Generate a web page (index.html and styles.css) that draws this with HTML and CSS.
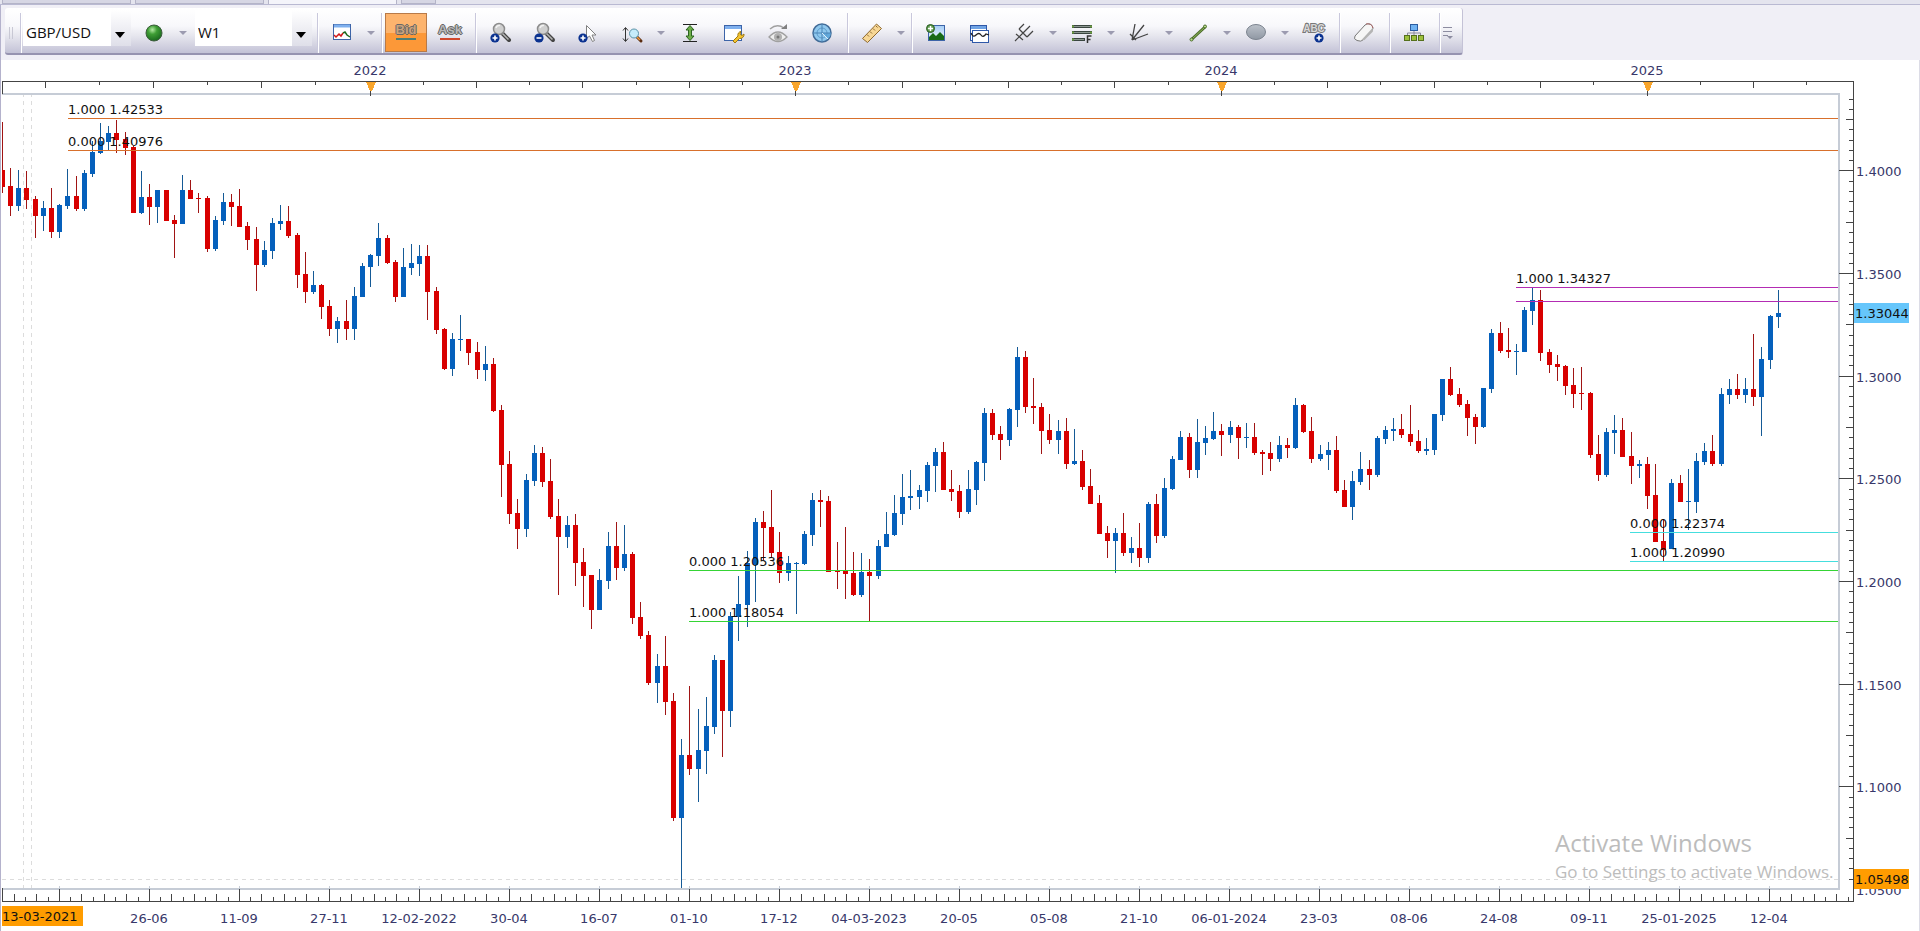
FILE: index.html
```html
<!DOCTYPE html>
<html lang="en">
<head>
  <meta charset="UTF-8">
  <title>GBP/USD W1</title>
  <link rel="stylesheet" href="styles.css">
</head>
<body>
  <svg class="defs" width="0" height="0" aria-hidden="true">
    <defs>
      <radialGradient id="ball" cx="0.4" cy="0.3" r="0.7">
        <stop offset="0" stop-color="#b4eaa4"/>
        <stop offset="0.4" stop-color="#3f9e35"/>
        <stop offset="1" stop-color="#1a6a1e"/>
      </radialGradient>
      <linearGradient id="steel" x1="0" y1="0" x2="0" y2="1">
        <stop offset="0" stop-color="#bcc2ca"/>
        <stop offset="1" stop-color="#8f97a3"/>
      </linearGradient>
      <linearGradient id="sky" x1="0" y1="0" x2="0" y2="1">
        <stop offset="0" stop-color="#a4cdf6"/>
        <stop offset="1" stop-color="#f2f8ff"/>
      </linearGradient>
      <symbol id="lens" viewBox="0 0 24 24">
        <path d="M14 12l7 7" stroke="#444" stroke-width="4" stroke-linecap="round"/>
        <path d="M14 12l6.500 6.500" stroke="#b5b5b5" stroke-width="1.500"/>
        <circle cx="11" cy="8" r="5.500" fill="#cfcfcf" stroke="#8d8d8d" stroke-width="1.500"/>
        <path d="M8 7a3.500 3.500 0 0 1 4-2.500" fill="none" stroke="#f2f2f2" stroke-width="1.500"/>
      </symbol>
      <symbol id="plus" viewBox="0 0 10 10">
        <circle cx="5" cy="5" r="4.600" fill="#0b3290"/>
        <path d="M2.500 5h5M5 2.500v5" stroke="#fff" stroke-width="1.600"/>
      </symbol>
    </defs>
  </svg>

  <div class="tabs">
    <div class="tab"></div>
    <div class="tab"></div>
    <div class="tab active"></div>
    <div class="tab small"></div>
  </div>

  <div class="toolbar-row">
    <div class="toolbar">
      <span class="grip"></span>
      <span class="sep"></span>
      <span class="combo symbol">
        <select aria-label="Symbol"><option>GBP/USD</option></select>
      </span>
      <button class="tool" title="Connection">
        <svg viewBox="0 0 24 24"><circle cx="12" cy="12" r="8" fill="url(#ball)" stroke="#3c5c3c"/></svg>
      </button>
      <button class="drop" title="More"></button>
      <span class="combo period">
        <select aria-label="Period"><option>W1</option></select>
      </span>
      <span class="sep"></span>
      <button class="tool" title="Chart type">
        <svg viewBox="0 0 24 24">
          <rect x="3.500" y="3.500" width="17" height="15" fill="#fff" stroke="#3d64a8"/>
          <path d="M4 5h16" stroke="#7fb0ee" stroke-width="3"/>
          <path d="M4 14l2 2 3-3 2 2 2-3" fill="none" stroke="#d01818" stroke-width="1.500"/>
          <path d="M13 12l2-1 2 3 3 2" fill="none" stroke="#1d6a1d" stroke-width="1.500"/>
        </svg>
      </button>
      <button class="drop" title="More"></button>
      <span class="sep"></span>
      <button class="tool price bid pressed">Bid</button>
      <button class="tool price ask">Ask</button>
      <span class="sep"></span>
      <button class="tool" title="Zoom in">
        <svg viewBox="0 0 24 24"><use href="#lens" width="24" height="24"/><use href="#plus" x="2" y="12" width="10" height="10"/></svg>
      </button>
      <button class="tool" title="Zoom out">
        <svg viewBox="0 0 24 24"><use href="#lens" width="24" height="24"/><circle cx="7" cy="17" r="4.600" fill="#0b3290"/><path d="M4.500 17h5" stroke="#fff" stroke-width="1.600"/></svg>
      </button>
      <button class="tool" title="Cursor">
        <svg viewBox="0 0 24 24"><path d="M10.500 4.500v13l3-2.500 3 5.500 2-1-2.500-5.500h4z" fill="#fff" stroke="#808080"/><use href="#plus" x="2" y="12" width="10" height="10"/></svg>
      </button>
      <button class="tool" title="Vertical zoom">
        <svg viewBox="0 0 24 24">
          <path d="M5.500 7v13M3 9.500l2.500-3 2.500 3M3 17.500l2.500 3 2.500-3" fill="none" stroke="#333"/>
          <path d="M17 16l4 4" stroke="#5a2c10" stroke-width="3" stroke-linecap="round"/>
          <path d="M17 16l3 3" stroke="#ee9a3c" stroke-width="1.500"/>
          <circle cx="14" cy="12.500" r="4.500" fill="#c6ecfa" stroke="#5b93a8"/>
        </svg>
      </button>
      <button class="drop" title="More"></button>
      <button class="tool" title="Fit height">
        <svg viewBox="0 0 24 24">
          <path d="M5 3.500h14M5 20.500h14" stroke="#222"/>
          <path d="M12 4.500l4 4.500h-2.500v6h2.500l-4 4.500-4-4.500h2.500v-6h-2.500z" fill="#6eae4a" stroke="#2c6420"/>
        </svg>
      </button>
      <button class="tool" title="Chart settings">
        <svg viewBox="0 0 24 24">
          <rect x="2.500" y="4.500" width="17" height="15" fill="#fff" stroke="#3d64a8"/>
          <path d="M3 6.500h16" stroke="#7fb0ee" stroke-width="3"/>
          <path d="M11 20l5-5a3.500 3.500 0 0 1 3-4.500l-1 2.500 2 1.500 2-1.500a4 4 0 0 1-4.500 4.500l-4.500 4.500z" fill="#f4c430" stroke="#a07a10"/>
        </svg>
      </button>
      <button class="tool" title="Show or hide">
        <svg viewBox="0 0 24 24">
          <path d="M3 16q9-10 18 0q-9 9-18 0z" fill="#eee" stroke="#a0a0a0" stroke-width="1.300"/>
          <circle cx="12" cy="16" r="4" fill="#b0b0b0"/><circle cx="12" cy="16" r="1.500" fill="#777"/>
          <path d="M4 8q7-6 14-1" fill="none" stroke="#a0a0a0" stroke-width="1.500"/><path d="M15 8h6v-5z" fill="#808080"/>
        </svg>
      </button>
      <button class="tool" title="Radar">
        <svg viewBox="0 0 24 24">
          <circle cx="12" cy="12" r="9" fill="#8fc8ee" stroke="#426c98" stroke-width="1.500"/>
          <path d="M12 12l6 6a9 9 0 0 0 3-6z" fill="#62a9dc"/>
          <circle cx="12" cy="12" r="5" fill="none" stroke="#5f9ccb"/>
          <path d="M12 3v18M3 12h18" stroke="#4a83b4"/>
          <path d="M12 12l6 6" stroke="#dff0fb"/>
        </svg>
      </button>
      <span class="sep"></span>
      <button class="tool" title="Ruler">
        <svg viewBox="0 0 24 24">
          <path d="M2.500 17.500l14-14.500 5 4.500-14 14z" fill="#f7d795" stroke="#8f6a30"/>
          <path d="M7 13.500l2 2M10 10.500l2 2M13 7.500l2 2M16 5l1.500 1.500" stroke="#8f6a30"/>
        </svg>
      </button>
      <button class="drop" title="More"></button>
      <span class="sep"></span>
      <button class="tool" title="Insert picture">
        <svg viewBox="0 0 24 24">
          <rect x="4.500" y="4.500" width="16" height="15" fill="url(#sky)" stroke="#3d64a8"/>
          <path d="M5 19v-3l4-4 3 3 4-4 4 4v4z" fill="#176a18"/>
          <circle cx="6.500" cy="7.500" r="4" fill="#5c9a4c" stroke="#2b5c22"/>
          <path d="M4 7.500h5M6.500 5v5" stroke="#fff" stroke-width="1.500"/>
        </svg>
      </button>
      <button class="tool" title="Add indicator">
        <svg viewBox="0 0 24 24">
          <rect x="2.500" y="4.500" width="16" height="15" fill="#fff" stroke="#2f58a8"/>
          <path d="M3 6.500h15" stroke="#6fa3e4" stroke-width="3"/>
          <rect x="4.500" y="9.500" width="16" height="12" fill="#fff" stroke="#2f58a8"/>
          <path d="M3 12q2 5 5 2t5 0 5-1l3 1" fill="none" stroke="#222" stroke-width="1.300"/>
        </svg>
      </button>
      <button class="tool" title="Pitchfork">
        <svg viewBox="0 0 24 24" fill="none" stroke="#444" stroke-width="1.200">
          <path d="M3 20l8-8M7 8l8 8M7 8l5-5M11 12l7-7M15 16l6-6M4 13l7 6"/>
        </svg>
      </button>
      <button class="drop" title="More"></button>
      <button class="tool" title="Fibonacci">
        <svg viewBox="0 0 24 24">
          <path d="M2 5.500h20M2 11.500h20M2 18.500h13" stroke="#3a4640" stroke-width="3"/>
          <path d="M3 5.500h18M3 11.500h18M3 18.500h11" stroke="#8b9690" stroke-width="1"/>
          <path d="M17.500 22v-7h4M17.500 18.500h3" fill="none" stroke="#333" stroke-width="1.500"/>
          <path d="M2 5.500h2M20 5.500h2M2 11.500h2M20 11.500h2M2 18.500h2" stroke="#6da040" stroke-width="2"/>
        </svg>
      </button>
      <button class="drop" title="More"></button>
      <button class="tool" title="Fan">
        <svg viewBox="0 0 24 24" fill="none" stroke="#444" stroke-width="1.300">
          <path d="M4 19l3-16M4 19l12-15M4 19l16-6M2 13l6 6"/>
        </svg>
      </button>
      <button class="drop" title="More"></button>
      <button class="tool" title="Line">
        <svg viewBox="0 0 24 24">
          <path d="M6 18l13-12" stroke="#4b6b2a" stroke-width="3"/><path d="M6 18l13-12" stroke="#8fb85a"/>
          <circle cx="5.500" cy="18.500" r="1.500" fill="#b8e08c" stroke="#4b6b2a"/><circle cx="19" cy="5.500" r="1.500" fill="#b8e08c" stroke="#4b6b2a"/>
        </svg>
      </button>
      <button class="drop" title="More"></button>
      <button class="tool" title="Ellipse">
        <svg viewBox="0 0 24 24"><ellipse cx="12" cy="11" rx="9.500" ry="7.500" fill="url(#steel)" stroke="#7c848f"/></svg>
      </button>
      <button class="drop" title="More"></button>
      <button class="tool" title="Text label">
        <svg viewBox="0 0 24 24"><text class="abc" x="12" y="11">ABC</text><use href="#plus" x="12" y="12" width="10" height="10"/></svg>
      </button>
      <span class="sep"></span>
      <button class="tool" title="Eraser">
        <svg viewBox="0 0 24 24">
          <path d="M3 15l10-11q2-2 5-1t3 5l-10 11q-2 2-6 .5t-2-4.500z" fill="#f6f6f6" stroke="#777"/>
          <path d="M9 19.500l11.500-12.500q1 3 0 4l-8 8z" fill="#b4b4b4"/>
          <path d="M14 3q6-1 7 4" fill="none" stroke="#b06a6a"/>
        </svg>
      </button>
      <span class="sep"></span>
      <button class="tool" title="Templates">
        <svg viewBox="0 0 24 24">
          <path d="M12 9v6M5.500 15v-3h13v3" fill="none" stroke="#8a8a9a"/>
          <rect x="8.500" y="3.500" width="7" height="6" fill="#6fb2f2" stroke="#2c5ca0"/>
          <rect x="2.500" y="14.500" width="5" height="5" fill="#9cc03c" stroke="#55701c"/>
          <rect x="9.500" y="14.500" width="5" height="5" fill="#9cc03c" stroke="#55701c"/>
          <rect x="16.500" y="14.500" width="5" height="5" fill="#9cc03c" stroke="#55701c"/>
        </svg>
      </button>
      <span class="sep"></span>
      <button class="more" title="Customize">
        <svg viewBox="0 0 12 24"><path d="M1 6.500h9M1 10.500h9M1 14.500h5" stroke="#8c8ca0"/><path d="M5 15h6l-3 3z" fill="#8c8ca0"/></svg>
      </button>
    </div>
  </div>

  <div class="chart-area">
    <svg id="chart" class="chart"></svg>
    <div class="watermark">
      <p class="watermark-title">Activate Windows</p>
      <p class="watermark-text">Go to Settings to activate Windows.</p>
    </div>
  </div>

  <script src="script.js"></script>
</body>
</html>
```

FILE: styles.css
```css
* {
  box-sizing: border-box;
}

body {
  margin: 0;
  height: 100vh;
  display: flex;
  flex-direction: column;
  overflow: hidden;
  background-color: white;
  font-family: "Open Sans", "Noto Sans", sans-serif;
}

.defs {
  position: absolute;
}

.tabs {
  display: flex;
  gap: 4px;
  height: 5px;
  padding-left: 2px;
  background-color: #e4e4ee;
  border-bottom: 1px solid #b9b9d2;
}

.tab {
  width: 129px;
  height: 4px;
  background-color: #d6d6e4;
  border: 1px solid #b4b4c8;
  border-top: none;
}

.tab.active {
  background-color: #f4f4fa;
  border-bottom: none;
}

.tab.small {
  width: 35px;
}

.toolbar-row {
  display: flex;
  height: 55px;
  padding: 3px 0 5px 4px;
  background-color: #f0eff6;
  border-left: 1px solid #b4b2cc;
}

.toolbar {
  display: flex;
  align-items: center;
  height: 47px;
  padding-top: 4px;
  border-bottom: 2px solid #9693b0;
  border-right: 1px solid #c4c2d6;
  border-radius: 3px;
  background: linear-gradient(#ffffff, #f8f8fb 40%, #e6e6ee 62%, #c3c2d6);
}

.grip {
  width: 12px;
  height: 12px;
  border-left: 4px solid transparent;
  background: repeating-linear-gradient(90deg, #c8c8d4 0 1px, transparent 1px 3px) content-box;
  padding-right: 2px;
}

.sep {
  width: 6px;
  height: 40px;
  background: linear-gradient(90deg, transparent 3px, #c9c8dc 3px 4px, white 4px 5px, transparent 5px);
}

.combo {
  position: relative;
  height: 36px;
  margin-bottom: 10px;
}

.combo.symbol {
  width: 108px;
  margin-right: 1px;
}

.combo.period {
  width: 117px;
  margin-left: 5px;
  margin-right: 2px;
}

.combo select {
  appearance: none;
  width: 100%;
  height: 100%;
  padding: 8px 24px 0 3px;
  border: none;
  border-radius: 0;
  background: linear-gradient(#fff, #dfdfe9) right / 20px 100% no-repeat white;
  color: #111;
  font: 15px "Open Sans", "Noto Sans", sans-serif;
}

.combo::after {
  content: "";
  position: absolute;
  right: 6px;
  top: 22px;
  border: 5px solid transparent;
  border-top: 6px solid black;
  border-bottom: none;
  pointer-events: none;
}

button {
  padding: 0;
  border: none;
  background: none;
}

.tool {
  display: flex;
  align-items: center;
  justify-content: center;
  width: 44px;
  height: 39px;
}

.tool svg {
  width: 24px;
  height: 24px;
}

.drop {
  width: 14px;
  height: 39px;
}

.drop::before {
  content: "";
  display: block;
  width: 0;
  margin: 0 auto;
  border: 4px solid transparent;
  border-top-color: #9c9bb0;
  border-bottom: none;
}

.price {
  position: relative;
  padding-bottom: 6px;
  color: #b8b8b8;
  font: bold 13px "Liberation Sans", sans-serif;
  text-shadow: 1px 0 #666, -1px 0 #666, 0 1px #666, 0 -1px #666;
}

.price::after {
  content: "";
  position: absolute;
  left: 12px;
  bottom: 12px;
  width: 20px;
  height: 2px;
}

.bid::after {
  background-color: #4a7d76;
}

.ask::after {
  background-color: #d0482c;
}

.price.pressed {
  width: 42px;
  margin: 0 1px;
  border: 1px solid #b87a48;
  background: linear-gradient(#fdb46e 52%, #fc9838 52%);
  color: #c9a27c;
}

.pressed::after {
  left: 10px;
  bottom: 11px;
}

.abc {
  fill: #d8d8d8;
  stroke: #777;
  stroke-width: 2px;
  paint-order: stroke;
  font: bold 10px "Liberation Sans", sans-serif;
  text-anchor: middle;
}

.more {
  width: 20px;
  height: 39px;
  padding-right: 6px;
}

.more svg {
  display: block;
  width: 12px;
  height: 24px;
}

.chart-area {
  position: relative;
  flex: 1;
  min-height: 0;
  border-left: 1px solid #b4b2cc;
  border-right: 1px solid #dcdce6;
}

.chart {
  display: block;
  width: 100%;
  height: 100%;
  shape-rendering: crispEdges;
}

.chart text {
  font: 13px "DejaVu Sans", sans-serif;
  fill: #38386a;
}

.chart .middle {
  text-anchor: middle;
}

.chart .dark {
  fill: #111;
}

.axis {
  fill: #444;
}

.frame {
  fill: #c6ccd6;
}

.guide {
  stroke: #dcdcdc;
  stroke-dasharray: 4 4;
}

.up {
  fill: #0560bc;
}

.down {
  fill: #d80000;
}

.up-wick {
  fill: #155a96;
}

.down-wick {
  fill: #a01414;
}

.year {
  fill: #f9a52b;
}

.tag-last {
  fill: #66c6fb;
}

.tag-cursor {
  fill: #ff9c00;
}

.watermark {
  position: absolute;
  right: 80px;
  bottom: 46px;
  width: 284px;
  color: #bcbcbc;
  white-space: nowrap;
}

.watermark p {
  margin: 0;
}

.watermark-title {
  font-size: 24px;
  line-height: 32px;
}

.watermark-text {
  font-size: 17px;
  line-height: 26px;
}
```

FILE: script.js
```js
// one weekly candle each: direction, then high, body top, body bottom, low
// levels count downwards on a 93-888 scale, 171 is 1.4000 and 102.65 is 0.0500
const candles = `
R122,170,187,193 R168,186,206,216 B170,188,206,211 R171,188,200,209 R196,199,216,238 B201,208,216,231
R188,208,232,238 B204,205,232,238 B169,196,206,209 R176,196,209,211 B170,173,209,211 B141,152,174,177
B123,141,153,154 B126,133,142,150 R120,133,140,153 R132,139,148,155 R146,147,213,213 B171,197,213,214
R184,197,207,225 B190,190,207,223 R190,190,221,221 R215,220,224,258 B175,190,224,224 R180,190,199,199
R193,198,199,213 R196,198,249,252 B216,220,249,251 B193,202,221,225 R194,202,207,226 R189,206,227,227
R222,226,240,250 R227,239,265,291 B241,250,265,267 B218,223,251,259 B205,221,224,230 R206,221,236,238
R233,235,275,288 R252,274,292,303 B271,285,292,294 R284,285,307,319 R300,306,329,336 B317,321,329,343
R300,321,329,340 B287,296,329,340 B263,266,297,297 B254,255,267,287 B223,238,256,266 R235,238,263,264
R260,262,297,302 B248,267,297,297 B244,263,268,275 B245,256,264,276 R245,256,292,320 R287,291,330,334
R328,329,369,370 B333,339,369,376 B315,339,340,351 R339,339,353,365 R342,352,370,379 B346,364,370,381
R358,364,411,412 R405,410,465,497 R451,464,514,524 R499,513,529,549 B474,480,529,537 B445,453,481,486
R447,453,482,487 R459,481,517,519 R499,516,537,595 B516,525,537,548 R514,525,563,586 R548,562,576,607
R575,575,610,629 B569,580,610,610 B532,546,581,589 R522,546,568,580 B525,554,568,571 R552,554,618,624
R602,617,636,639 R631,635,683,685 B654,666,683,703 R636,666,702,715 R693,701,818,821 B739,755,818,888
R686,755,769,775 B709,750,769,802 B697,726,751,774 B655,660,727,734 R660,660,711,757 B612,616,711,727
B576,604,617,641 B551,563,605,627 B518,522,565,602 R511,522,528,560 R490,527,553,557 R532,552,573,583
B556,563,573,581 B562,563,564,614 B531,534,564,565 B493,500,535,546 R490,500,502,527 R496,501,572,572
R542,571,572,589 R527,571,574,599 R552,573,595,596 B553,572,595,597 R559,572,576,621 B540,546,576,579
B512,534,547,547 B495,513,535,536 B474,497,514,525 B470,496,498,510 B485,490,497,509 B462,465,491,502
B448,452,466,492 R442,452,490,490 R470,489,492,501 R485,491,512,518 B470,489,512,514 B461,462,490,505
B408,413,463,481 R409,413,435,440 R426,434,440,460 B408,409,440,446 B347,357,410,427 R351,357,407,413
R378,406,408,424 R403,407,431,454 R414,430,440,444 B420,431,440,454 R418,431,464,469 B429,461,464,465
R450,461,487,490 R469,486,504,504 R495,503,534,534 R526,533,541,558 B528,533,541,573 R513,533,553,556
B537,548,553,563 R523,548,558,567 B502,504,558,563 R494,504,536,543 B478,488,536,538 B456,459,489,490
B431,437,460,460 R433,437,470,478 B419,442,470,478 B426,438,443,455 B412,431,439,440 R424,431,435,456
B421,427,435,443 R425,427,438,459 B423,437,438,448 R423,437,453,455 R450,452,454,475 R442,453,459,471
B436,445,459,462 R438,445,448,458 B398,405,448,449 R404,405,432,433 R417,431,459,463 B445,454,459,461
B442,450,455,470 R436,450,491,493 R480,490,507,507 B471,481,507,520 B452,469,482,485 R460,469,475,490
B436,438,475,477 B426,430,439,444 B418,429,431,441 R414,429,435,438 R405,434,442,446 R430,441,451,453
B438,449,451,455 B414,414,450,455 B379,379,415,421 R367,379,395,396 R388,394,405,407 R400,404,418,436
R414,417,427,444 B388,388,427,428 B329,333,389,393 R322,333,351,353 R328,350,352,358 B344,351,352,375
B307,310,352,352 B288,300,311,325 R290,300,353,361 R349,352,365,373 R355,364,367,381 R365,366,386,395
R368,385,394,408 R367,393,394,410 R392,393,455,458 R435,454,475,481 B428,432,475,477 B415,430,433,454
R418,430,457,457 R432,456,466,484 B460,464,466,478 R457,464,496,509 R464,495,542,542 R519,541,550,561
B479,483,549,549 R475,483,502,502 B469,501,502,530 B453,461,502,513 B443,451,462,465 R435,451,464,466
B388,394,464,466 B379,389,395,404 R374,389,395,399 B378,389,395,403 R334,389,397,406 B347,359,397,436
B315,316,360,369 B290,313,317,328`.trim().split(/\s+/);

// level, start, colour, label
const levels = [
  [118, 68, '#d8702c', '1.000 1.42533'],
  [150, 68, '#d8702c', '0.000 1.40976'],
  [287, 1516, '#b32cb3', '1.000 1.34327'],
  [301, 1516, '#b32cb3', ''],
  [532, 1630, '#45dede', '0.000 1.22374'],
  [561, 1630, '#45dede', '1.000 1.20990'],
  [570, 689, '#35d435', '0.000 1.20536'],
  [621, 689, '#35d435', '1.000 1.18054']
];

const dates = ['', '26-06', '11-09', '27-11', '12-02-2022', '30-04', '16-07', '01-10', '17-12', '04-03-2023',
  '20-05', '05-08', '21-10', '06-01-2024', '23-03', '08-06', '24-08', '09-11', '25-01-2025', '12-04'];

const years = { 6: '2022', 14: '2023', 22: '2024', 30: '2025' };

const chart = document.getElementById('chart');

function rect(x, y, w, h, cls) {
  return `<rect x="${x}" y="${y}" width="${w}" height="${h}" class="${cls}"/>`;
}

function text(x, y, value, cls = '') {
  return `<text x="${x}" y="${y}" class="${cls}">${value}</text>`;
}

function drawChart() {
  const left = 1;
  const right = chart.clientWidth - 81;
  const top = 33;
  const bottom = chart.clientHeight - 43;
  const axisX = right + 15;
  const axisY = bottom + 13;
  const px = v => Math.floor(left + (v - 2) * (right - left) / 1836);
  const py = v => Math.round(top + (v - 93) * (bottom - top) / 795);
  let out = '';

  // dashed guides
  for (const v of [23, 31]) {
    out += `<line x1="${px(v) + 0.5}" x2="${px(v) + 0.5}" y1="${top}" y2="${bottom}" class="guide"/>`;
  }
  out += `<line x1="${left}" x2="${right}" y1="${py(879) + 0.5}" y2="${py(879) + 0.5}" class="guide"/>`;

  // plot frame
  out += rect(left, top, right - left, 2, 'frame');
  out += rect(left, bottom, right - left + 2, 2, 'frame');
  out += rect(right, top, 2, bottom - top, 'frame');

  // time ruler on top
  out += rect(left, 21, axisX - left + 1, 1, 'axis');
  out += rect(left, 21, 1, 13, 'axis');
  for (let i = 0; i < 34; i++) {
    const x = px(i < 6 ? 45 + i * 54 : 370 + (i - 6) * 53.21);
    if (years[i]) {
      out += rect(x, 22, 1, 14, 'axis');
      out += `<path d="M${x - 4} 22h10l-4 9h-2z" class="year"/>`;
      out += text(x, 15, years[i], 'middle');
    } else {
      out += rect(x, 22, 1, i % 2 ? 3 : 6, 'axis');
    }
  }

  // date ruler
  out += rect(left, axisY, axisX - left + 1, 1, 'axis');
  out += rect(left, bottom, 1, 13, 'axis');
  for (let i = -4; i < 160; i++) {
    const x = px(59.3 + i * 11.25);
    if (x >= axisX) break;
    const h = i % 8 === 0 ? 13 : i % 2 ? 4 : 7;
    out += rect(x, axisY - h, 1, h, 'axis');
    if (h === 13) {
      out += rect(x, bottom - 2, 1, 3, 'frame');
      out += text(x, axisY + 22, dates[i / 8], 'middle');
    }
  }

  // price ruler
  out += rect(axisX, 21, 1, axisY - 20, 'axis');
  for (let i = -7; i < 70; i++) {
    const y = py(170.4 + i * 10.265);
    const w = i % 10 === 0 ? 14 : i % 5 === 0 ? 7 : 4;
    out += rect(axisX - w, y, w, 1, 'axis');
  }
  for (let i = 0; i < 8; i++) {
    out += text(axisX + 3, py(170.4 + i * 102.65) + 6, (1.4 - i * 0.05).toFixed(4));
  }

  candles.forEach((candle, i) => {
    const dir = candle[0] === 'B' ? 'up' : 'down';
    const [high, open, close, low] = candle.slice(1).split(',').map(v => py(Number(v)));
    const x = px(2.4 + i * 8.184);
    const start = Math.max(x - 2, left);
    out += rect(x, high, 1, low - high, dir + '-wick');
    out += rect(start, open, x + 3 - start, Math.max(close - open, 1), dir);
  });

  for (const [level, start, color, label] of levels) {
    out += `<rect x="${px(start)}" y="${py(level)}" width="${right - px(start)}" height="1" fill="${color}"/>`;
    out += text(px(start), py(level) - 4, label, 'dark');
  }

  // price and date tags
  out += rect(axisX + 1, py(303), 55, 20, 'tag-last');
  out += text(axisX + 2, py(303) + 15, '1.33044', 'dark');
  out += rect(axisX + 1, py(869), 55, 20, 'tag-cursor');
  out += text(axisX + 2, py(869) + 15, '1.05498', 'dark');
  out += rect(left, axisY + 5, 81, 20, 'tag-cursor');
  out += text(left, axisY + 20, '13-03-2021', 'dark');

  chart.innerHTML = out;
}

drawChart();
window.addEventListener('resize', drawChart);
```
